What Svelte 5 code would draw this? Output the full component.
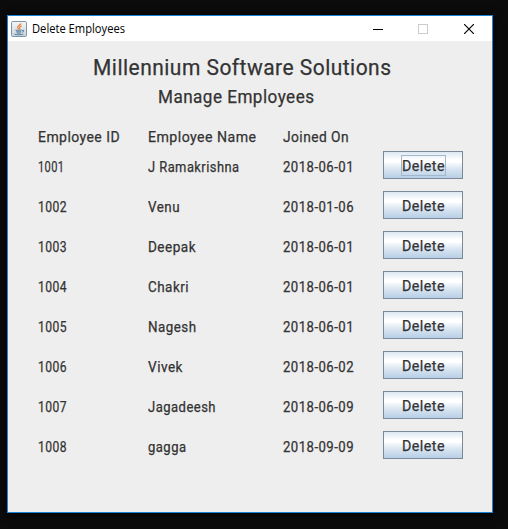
<script>
  const employees = [
    { id: '1001', name: 'J Ramakrishna', width: 91, joined: '2018-06-01' },
    { id: '1002', name: 'Venu', width: 31.5, joined: '2018-01-06' },
    { id: '1003', name: 'Deepak', width: 47.5, joined: '2018-06-01' },
    { id: '1004', name: 'Chakri', width: 40.5, joined: '2018-06-01' },
    { id: '1005', name: 'Nagesh', width: 48, joined: '2018-06-01' },
    { id: '1006', name: 'Vivek', width: 34.5, joined: '2018-06-02' },
    { id: '1007', name: 'Jagadeesh', width: 67.5, joined: '2018-06-09' },
    { id: '1008', name: 'gagga', width: 38, joined: '2018-09-09' }
  ];
</script>

{#snippet label(text, width, size)}
  <svg class="label" {width} height={size} style:font-size="{size}px">
    <text x="0" y={Math.round(size * 0.8)} textLength={width} lengthAdjust="spacingAndGlyphs">{text}</text>
  </svg>
{/snippet}

<div class="desktop">
  <main class="window">
    <header class="titlebar">
      <svg class="java" width="16" height="16" viewBox="0 0 16 16">
        <defs>
          <linearGradient id="tile" x1="0" y1="0" x2="0" y2="1">
            <stop offset="0" stop-color="#f4f6f7" /><stop offset="1" stop-color="#c7d3dc" />
          </linearGradient>
        </defs>
        <rect x=".5" y=".5" width="15" height="15" rx="1.2" fill="url(#tile)" stroke="#7b97a9" />
        <path d="M10 2.5C9.5 4.1 6 4.8 6.6 6.5C6.9 7.2 7.7 7.6 7.4 8.3M10.7 4.9C8.9 5.5 8 6.2 8.7 7.1C9 7.6 8.8 8 8.4 8.4" fill="none" stroke="#e8792a" stroke-width="1.1" />
        <path d="M4.5 9.2H10.7M5.2 10.8H10.2M11 9.4C13.5 8.6 13.4 10.8 11 11.3M5.7 12.1H9.8M3.5 13.2C5.5 14 10 14 12.3 13.1" fill="none" stroke="#557c98" stroke-width="1" />
      </svg>
      <span class="caption">{@render label('Delete Employees', 93, 12)}</span>
      <div class="controls">
        <svg width="10" height="10" viewBox="0 0 10 10" shape-rendering="crispEdges"><path d="M0 5.5H10" stroke="#000" /></svg>
        <svg width="10" height="10" viewBox="0 0 10 10"><rect x=".5" y=".5" width="9" height="9" fill="none" stroke="#ccc" /></svg>
        <svg class="close" width="10" height="10" viewBox="0 0 10 10"><path d="M0 0L10 10M10 0L0 10" stroke="#000" stroke-width="1.15" /></svg>
      </div>
    </header>

    <section class="content">
      <h1>{@render label('Millennium Software Solutions', 298.5, 22)}</h1>
      <h2>{@render label('Manage Employees', 156.5, 18)}</h2>
      <div class="grid head">
        {@render label('Employee ID', 82, 15.5)}
        {@render label('Employee Name', 108.5, 15.5)}
        {@render label('Joined On', 66, 15.5)}
      </div>
      {#each employees as employee, i}
        <div class="grid row">
          {@render label(employee.id, employee.id === '1001' ? 26.5 : 29, 14)}
          {@render label(employee.name, employee.width + 0.5, 14)}
          {@render label(employee.joined, 71, 14)}
          <button><span class:focused={i === 0}>{@render label('Delete', 43, 15.5)}</span></button>
        </div>
      {/each}
    </section>
  </main>
</div>

<style>
  :global(body) { margin: 0; background: #0b0b0b; }
  .desktop {
    box-sizing: border-box;
    width: 508px;
    height: 529px;
    padding: 15px 15px 16px 7px;
    background: #0b0b0b;
    overflow: hidden;
  }
  .window {
    box-sizing: border-box;
    width: 486px;
    height: 498px;
    border: 1px solid #1883d7;
    background: #eee;
    box-shadow: 0 2px 9px #000;
  }
  svg { display: block; flex: none; }
  .label {
    overflow: visible;
    fill: #333;
    stroke: #333;
    stroke-width: 0.25px;
    letter-spacing: 0.5px;
    font-family: Roboto, "Liberation Sans", sans-serif;
    font-weight: 400;
  }
  .titlebar {
    box-sizing: border-box;
    display: flex;
    align-items: center;
    height: 25px;
    padding: 0 18px 0 3px;
    background: #fff;
  }
  .caption { margin-left: 5px; }
  .caption :global(.label) {
    font-family: "Open Sans", "Noto Sans", sans-serif;
    fill: #000;
    stroke: none;
    letter-spacing: 0;
  }
  .controls { display: flex; gap: 35px; margin-left: auto; }
  .close { margin-left: 1px; }
  .content { padding: 16px 0 0 30px; }
  h1, h2 { margin: 0; font-weight: 400; }
  h1 { padding-left: 55px; }
  h2 { padding: 10px 0 0 120px; }
  .grid { display: grid; grid-template-columns: 110px 135px 100px 80px; }
  .head { padding-top: 23px; height: 21px; }
  .row { height: 28px; margin-bottom: 12px; align-items: center; }
  .row > :global(.label) { position: relative; top: 3px; }
  button {
    box-sizing: border-box;
    display: flex;
    align-items: center;
    justify-content: center;
    width: 80px;
    height: 28px;
    padding: 0;
    border: 1px solid #7a8a99;
    border-radius: 0;
    background: linear-gradient(#dde8f3 0, #fff 30%, #fff 38%, #dce7f2 62%, #b8cfe5 100%);
  }
  button span { height: 15px; padding: 3px 0 1px; border: 1px solid transparent; }
  button .focused { border-color: #a3b8cc; }
</style>
